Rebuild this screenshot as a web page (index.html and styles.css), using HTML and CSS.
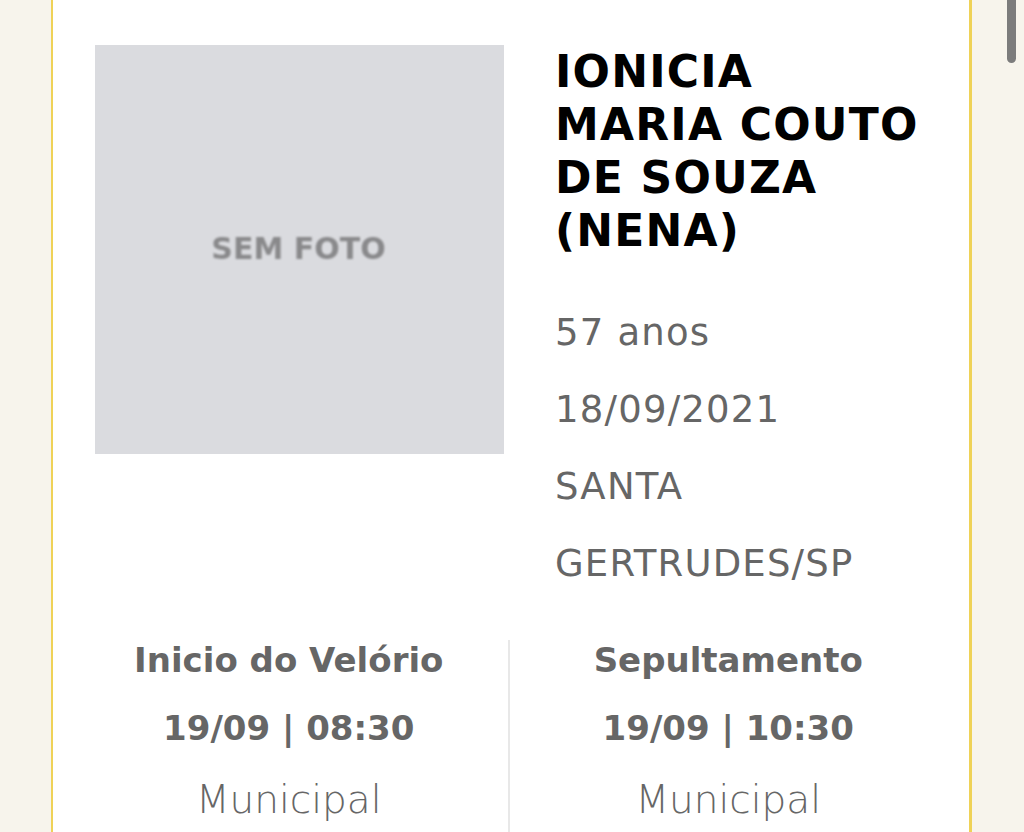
FILE: index.html
```html
<!DOCTYPE html>
<html lang="pt-BR">
<head>
<meta charset="utf-8">
<title>Obituário</title>
<link rel="stylesheet" href="styles.css">
</head>
<body>
<div class="page">
  <article class="card">
    <section class="top">
      <div class="photo"><span class="photo-label">SEM FOTO</span></div>
      <div class="info">
        <h1 class="name">IONICIA MARIA COUTO DE SOUZA (NENA)</h1>
        <p class="detail">57 anos</p>
        <p class="detail">18/09/2021</p>
        <p class="detail">SANTA GERTRUDES/SP</p>
      </div>
    </section>
    <section class="events">
      <div class="event">
        <h2 class="event-title">Inicio do Velório</h2>
        <p class="event-time">19/09 | 08:30</p>
        <p class="event-place">Municipal</p>
      </div>
      <div class="event event-right">
        <h2 class="event-title">Sepultamento</h2>
        <p class="event-time">19/09 | 10:30</p>
        <p class="event-place">Municipal</p>
      </div>
    </section>
  </article>
  <div class="scrollbar"></div>
</div>
</body>
</html>
```

FILE: styles.css
```css
html, body {
  margin: 0;
  padding: 0;
  height: 100%;
  overflow: hidden;
}
body {
  background: #f7f4ec;
  font-family: "DejaVu Sans", "Liberation Sans", sans-serif;
}
.page {
  position: relative;
  height: 832px;
  padding-left: 51px;
}
.card {
  width: 921px;
  height: 832px;
  box-sizing: border-box;
  background: #ffffff;
  border-left: 2px solid #efd257;
  border-right: 3px solid #efd257;
  padding: 45px 42px 0 42px;
  overflow: hidden;
}
.top {
  display: flex;
  gap: 51px;
}
.photo {
  flex: 0 0 409px;
  height: 409px;
  background: #dadbdf;
  display: flex;
  align-items: center;
  justify-content: center;
}
.photo-label {
  color: #89898b;
  font-weight: bold;
  font-size: 30px;
  filter: blur(1px);
  margin-top: -3px;
  margin-left: -2px;
}
.info {
  flex: 1;
}
.name {
  margin: 0;
  font-size: 44px;
  line-height: 53px;
  font-weight: bold;
  color: #000;
  letter-spacing: 1.2px;
}
.detail {
  margin: 0;
  font-size: 37px;
  line-height: 77px;
  color: #666;
  letter-spacing: 1.2px;
}
.name + .detail {
  margin-top: 37px;
}
.events {
  display: flex;
  margin: 38px -20px 0 -25px;
}
.event {
  flex: 1;
  text-align: center;
  min-height: 192px;
}
.event-right {
  border-left: 2px solid #e8e8e8;
}
.event-title {
  margin: 0;
  font-size: 34px;
  line-height: 40px;
  color: #666;
  font-weight: bold;
}
.event-time {
  margin: 28px 0 0;
  font-size: 34px;
  line-height: 40px;
  color: #666;
  font-weight: bold;
}
.event-place {
  margin: 32px 0 0;
  font-size: 39px;
  line-height: 40px;
  color: #666;
  font-weight: 300;
}
.scrollbar {
  position: absolute;
  top: -6px;
  left: 1007px;
  width: 9px;
  height: 69px;
  border-radius: 5px;
  background: #7c7c7c;
}
```
